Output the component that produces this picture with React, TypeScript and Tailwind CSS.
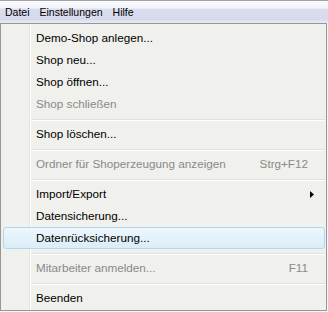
import React from "react";

type Item =
  | { type: "sep" }
  | { type: "item"; label: string; disabled?: boolean; shortcut?: string; submenu?: boolean; hover?: boolean };

const items: Item[] = [
  { type: "item", label: "Demo-Shop anlegen..." },
  { type: "item", label: "Shop neu..." },
  { type: "item", label: "Shop öffnen..." },
  { type: "item", label: "Shop schließen", disabled: true },
  { type: "sep" },
  { type: "item", label: "Shop löschen..." },
  { type: "sep" },
  { type: "item", label: "Ordner für Shoperzeugung anzeigen", disabled: true, shortcut: "Strg+F12" },
  { type: "sep" },
  { type: "item", label: "Import/Export", submenu: true },
  { type: "item", label: "Datensicherung..." },
  { type: "item", label: "Datenrücksicherung...", hover: true },
  { type: "sep" },
  { type: "item", label: "Mitarbeiter anmelden...", disabled: true, shortcut: "F11" },
  { type: "sep" },
  { type: "item", label: "Beenden" },
];

export default function App() {
  return (
    <div
      className="w-[328px] h-[312px] bg-[#f7f7f7] overflow-hidden text-[11.7px] text-black"
      style={{ fontFamily: '"Liberation Sans", Arial, sans-serif' }}
    >
      <div className="h-[23px] border-t border-[#a3a3a3] bg-[linear-gradient(to_bottom,#f8f9fd_0px,#f3f4fa_7px,#dadded_8px,#d7daee_19px,#e2e5f4_20px,#e6e8f6_22px)] flex items-center text-[10.5px] pt-[1px]">
        <span className="ml-[5px]">Datei</span>
        <span className="ml-[10px]">Einstellungen</span>
        <span className="ml-[10px]">Hilfe</span>
      </div>
      <div className="w-[327px] h-[288px] border border-[#979797] bg-[#f0f0ed] bg-[linear-gradient(to_right,transparent_28px,#e2e3e3_28px,#e2e3e3_29px,#ffffff_29px,#ffffff_30px,transparent_30px)] pt-[3px] flex flex-col">
        {items.map((it, i) =>
          it.type === "sep" ? (
            <div key={i} className="h-[8px] pl-[30px] pr-[1px] pt-[4px]">
              <div className="h-[1px] bg-[#e0e0e0]" />
              <div className="h-[1px] bg-white" />
            </div>
          ) : (
            <div
              key={i}
              className={
                "h-[22px] ml-[2px] mr-[1px] flex items-center pl-[32px] pr-[16px] rounded-[3px] border " +
                (it.hover
                  ? "border-[#b0d8ee] bg-[linear-gradient(to_bottom,#edf6fc,#dbedf8)]"
                  : "border-transparent") +
                (it.disabled ? " text-[#8a8a8a]" : "")
              }
            >
              <span className="flex-1 whitespace-nowrap">{it.label}</span>
              {it.shortcut && <span className="whitespace-nowrap">{it.shortcut}</span>}
              {it.submenu && (
                <svg width="4" height="7" viewBox="0 0 4 7" className="mr-[-6px]">
                  <path d="M0 0 L4 3.5 L0 7 Z" fill="#000" />
                </svg>
              )}
            </div>
          )
        )}
      </div>
    </div>
  );
}
